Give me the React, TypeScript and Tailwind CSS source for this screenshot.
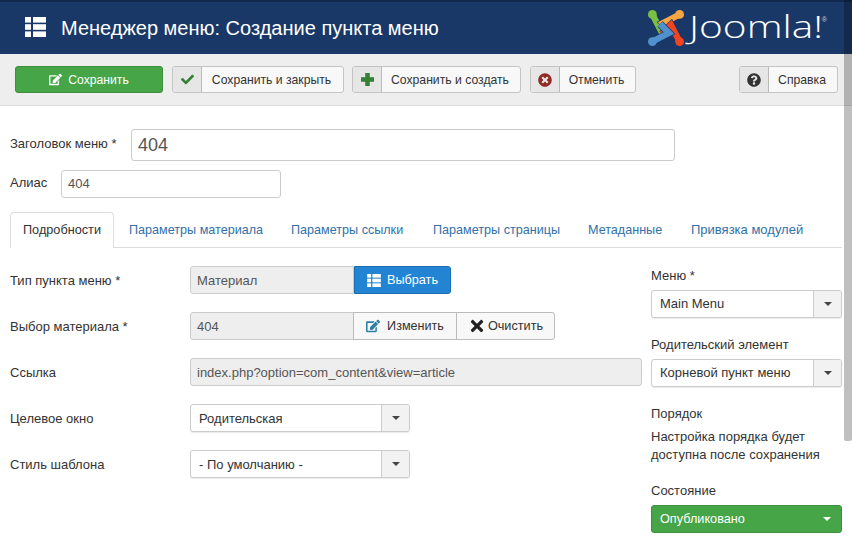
import React from "react";
import { FaEdit, FaCheck, FaTimesCircle, FaQuestionCircle, FaTimes } from "react-icons/fa";

function Logo() {
  const pieces = [
    { c: "#7ac143", r: 0 },
    { c: "#f9a541", r: 90 },
    { c: "#f44321", r: 180 },
    { c: "#5091cd", r: 270 },
  ];
  return (
    <svg width="38" height="38" viewBox="-19 -19 38 38" className="shrink-0">
      {pieces.map((p) => (
        <g key={p.c} transform={`rotate(${p.r})`}>
          <path d="M-13.6 -13.6 L-5 3 L4 -6" fill="none" stroke="#1a3867" strokeWidth="7.6" />
          <path d="M-13.6 -13.6 L-5 3 L4 -6" fill="none" stroke={p.c} strokeWidth="6.2" />
          <circle cx="-13.6" cy="-13.6" r="4.4" fill={p.c} />
        </g>
      ))}
    </svg>
  );
}

function ListIcon({ w, h, className = "" }: { w: number; h: number; className?: string }) {
  return (
    <svg width={w} height={h} viewBox="0 0 21 20" className={className} fill="currentColor">
      <rect x="0" y="0" width="6" height="5.6" />
      <rect x="8" y="0" width="13" height="5.6" />
      <rect x="0" y="7.2" width="6" height="5.6" />
      <rect x="8" y="7.2" width="13" height="5.6" />
      <rect x="0" y="14.4" width="6" height="5.6" />
      <rect x="8" y="14.4" width="13" height="5.6" />
    </svg>
  );
}

function PlusIcon() {
  return (
    <svg width="13" height="13" viewBox="0 0 13 13" fill="#378137">
      <rect x="4.2" y="0" width="4.6" height="13" />
      <rect x="0" y="4.2" width="13" height="4.6" />
    </svg>
  );
}

function ToolBtn({ icon, label, w }: { icon: React.ReactNode; label: string; w: string }) {
  return (
    <button className={`flex h-[27px] ${w} items-stretch overflow-hidden rounded-[3px] border border-[#c4c4c4] bg-[#f8f8f8] text-[12.2px] text-[#333]`}>
      <span className="flex w-[29px] shrink-0 items-center justify-center border-r border-[#b9b9b9] bg-[#e6e6e6]">{icon}</span>
      <span className="flex flex-1 items-center justify-center pt-[1px] pr-[2px]">{label}</span>
    </button>
  );
}

function Select({ value, w, nudge = false }: { value: string; w: string; nudge?: boolean }) {
  return (
    <div className={`flex h-[28px] ${w} items-stretch overflow-hidden rounded-[3px] border border-[#ccc] bg-white text-[13px] text-[#333] shadow-[0_1px_1px_rgba(0,0,0,0.08)]`}>
      <span className={`flex flex-1 items-center pl-[8px] ${nudge ? "pt-[1px]" : ""}`}>{value}</span>
      <span className="flex w-[28px] items-center justify-center border-l border-[#ccc] bg-[#f2f2f2]">
        <span className="h-0 w-0 border-x-[4px] border-t-[4px] border-x-transparent border-t-[#444]" />
      </span>
    </div>
  );
}

function Row({ label, children }: { label: string; children: React.ReactNode }) {
  return (
    <div className="flex h-[28px] items-center">
      <div className="w-[180px] shrink-0 pt-[1px] text-[13px] text-[#333]">{label}</div>
      {children}
    </div>
  );
}

function Disabled({ value, w, round = "rounded-[3px]" }: { value: string; w: string; round?: string }) {
  return (
    <div className={`flex h-[28px] ${w} items-center border border-[#ccc] bg-[#eee] pl-[6px] pt-[1px] text-[13px] text-[#555] ${round}`}>{value}</div>
  );
}

function TabLink({ w, label, size = "text-[12.6px]" }: { w: string; label: string; size?: string }) {
  return <a className={`flex ${w} items-center whitespace-nowrap pt-[1px] ${size} text-[#3071a9]`}>{label}</a>;
}

export default function App() {
  return (
    <div className="relative h-[540px] w-[852px] overflow-hidden bg-white font-['Liberation_Sans',Arial,sans-serif] text-[13px] text-[#333]">
      <header className="flex h-[54px] items-center border-t-2 border-[#12294c] bg-[#1a3867]">
        <ListIcon w={21} h={20} className="ml-[25px] mt-[-2px] text-white" />
        <h1 className="ml-[15px] mt-[-1px] text-[20px] font-normal text-white">Менеджер меню: Создание пункта меню</h1>
        <div className="ml-auto mr-[25px] flex items-center">
          <Logo />
          <span className="ml-[4px] mt-[-3px] w-[133px] origin-left scale-x-[1.31] whitespace-nowrap font-['Open_Sans',sans-serif] text-[31px] font-light leading-none text-white">Joomla!</span>
          <span className="mb-[16px] text-[7px] text-[#ccd]">®</span>
        </div>
      </header>

      <div className="flex h-[52px] items-center border-b border-[#ddd] bg-[#eee] pl-[15px] pr-[14px]">
        <button className="flex h-[27px] w-[148px] items-center justify-center gap-[6px] rounded-[3px] border border-[#3e8e3e] bg-[#46a546] text-[12.2px] text-white">
          <FaEdit className="text-[13px]" />
          <span className="pt-[1px]">Сохранить</span>
        </button>
        <div className="ml-[9px]"><ToolBtn w="w-[172px]" icon={<FaCheck className="text-[13px] text-[#378137]" />} label="Сохранить и закрыть" /></div>
        <div className="ml-[8px]"><ToolBtn w="w-[169px]" icon={<PlusIcon />} label="Сохранить и создать" /></div>
        <div className="ml-[9px]"><ToolBtn w="w-[106px]" icon={<FaTimesCircle className="text-[14px] text-[#942a25]" />} label="Отменить" /></div>
        <div className="ml-auto"><ToolBtn w="w-[99px]" icon={<FaQuestionCircle className="text-[14px] text-[#333]" />} label="Справка" /></div>
      </div>

      <div className="pl-[10px] pr-[10px] pt-[23px]">
        <div className="flex items-center">
          <label className="w-[121px] shrink-0 pb-[3px]">Заголовок меню *</label>
          <div className="flex h-[32px] w-[544px] items-center rounded-[3px] border border-[#ccc] pl-[6px] text-[18px] text-[#555]">404</div>
        </div>
        <div className="mt-[9px] flex items-center">
          <label className="w-[51px] shrink-0 pb-[3px]">Алиас</label>
          <div className="flex h-[28px] w-[220px] items-center rounded-[3px] border border-[#ccc] pl-[6px] text-[#555]">404</div>
        </div>

        <nav className="mt-[14px] flex h-[36px] w-[832px] items-stretch gap-[28px] border-b border-[#ddd]">
          <div className="mr-[-13px] flex h-[36px] w-[104px] items-center justify-center rounded-t-[4px] border border-b-0 border-[#ddd] bg-white pt-[1px] text-[12.7px]">Подробности</div>
          <TabLink w="w-[134px]" label="Параметры материала" />
          <TabLink w="w-[114px]" label="Параметры ссылки" />
          <TabLink w="w-[127px]" label="Параметры страницы" />
          <TabLink w="w-[75px]" label="Метаданные" />
          <TabLink w="w-[112px]" label="Привязка модулей" size="text-[13px]" />
        </nav>

        <div className="mt-[18px] flex">
          <div className="flex w-[641px] shrink-0 flex-col gap-[18px]">
            <Row label="Тип пункта меню *">
              <Disabled value="Материал" w="w-[164px]" round="rounded-l-[3px]" />
              <button className="flex h-[28px] w-[97px] items-center justify-center gap-[6px] rounded-r-[3px] border border-[#1d6cb0] bg-[#2384d3] text-[12.7px] text-white">
                <ListIcon w={14} h={13} />
                <span className="pt-[1px]">Выбрать</span>
              </button>
            </Row>
            <Row label="Выбор материала *">
              <Disabled value="404" w="w-[164px]" round="rounded-l-[3px]" />
              <button className="ml-[-1px] flex h-[28px] w-[104px] items-center justify-center gap-[7px] border border-[#bbb] bg-[#f8f8f8] text-[12.6px]">
                <FaEdit className="text-[14px] text-[#2f7fa5]" />
                <span className="pt-[1px]">Изменить</span>
              </button>
              <button className="ml-[-1px] flex h-[28px] w-[99px] items-center justify-center gap-[2px] rounded-r-[3px] border border-[#bbb] bg-[#f8f8f8] text-[12.7px]">
                <FaTimes className="text-[18px] text-[#222]" />
                <span className="pt-[1px]">Очистить</span>
              </button>
            </Row>
            <Row label="Ссылка">
              <Disabled value="index.php?option=com_content&view=article" w="w-[452px]" />
            </Row>
            <Row label="Целевое окно">
              <Select value="Родительская" w="w-[220px]" nudge />
            </Row>
            <Row label="Стиль шаблона">
              <Select value="- По умолчанию -" w="w-[220px]" nudge />
            </Row>
          </div>

          <aside className="w-[191px] shrink-0 pt-[1px]">
            <div className="leading-[18px]">Меню *</div>
            <div className="mt-[5px]"><Select value="Main Menu" w="w-[191px]" /></div>
            <div className="mt-[18px] leading-[18px]">Родительский элемент</div>
            <div className="mt-[5px]"><Select value="Корневой пункт меню" w="w-[191px]" /></div>
            <div className="mt-[18px] leading-[18px]">Порядок</div>
            <p className="mt-[5px] leading-[18px]">Настройка порядка будет<br />доступна после сохранения</p>
            <div className="mt-[18px] leading-[18px]">Состояние</div>
            <div className="mt-[5px] flex h-[28px] w-[191px] items-center justify-between rounded-[3px] border border-[#3e8e3e] bg-[#46a546] pl-[8px] pr-[10px] text-[12.7px] text-white">
              <span className="pt-[1px]">Опубликовано</span>
              <span className="h-0 w-0 border-x-[4px] border-t-[4px] border-x-transparent border-t-white" />
            </div>
          </aside>
        </div>
      </div>

      <div className="absolute right-0 top-0 h-[441px] w-[8px] rounded-b-[2px] bg-[rgba(0,0,0,0.25)]" />
    </div>
  );
}
